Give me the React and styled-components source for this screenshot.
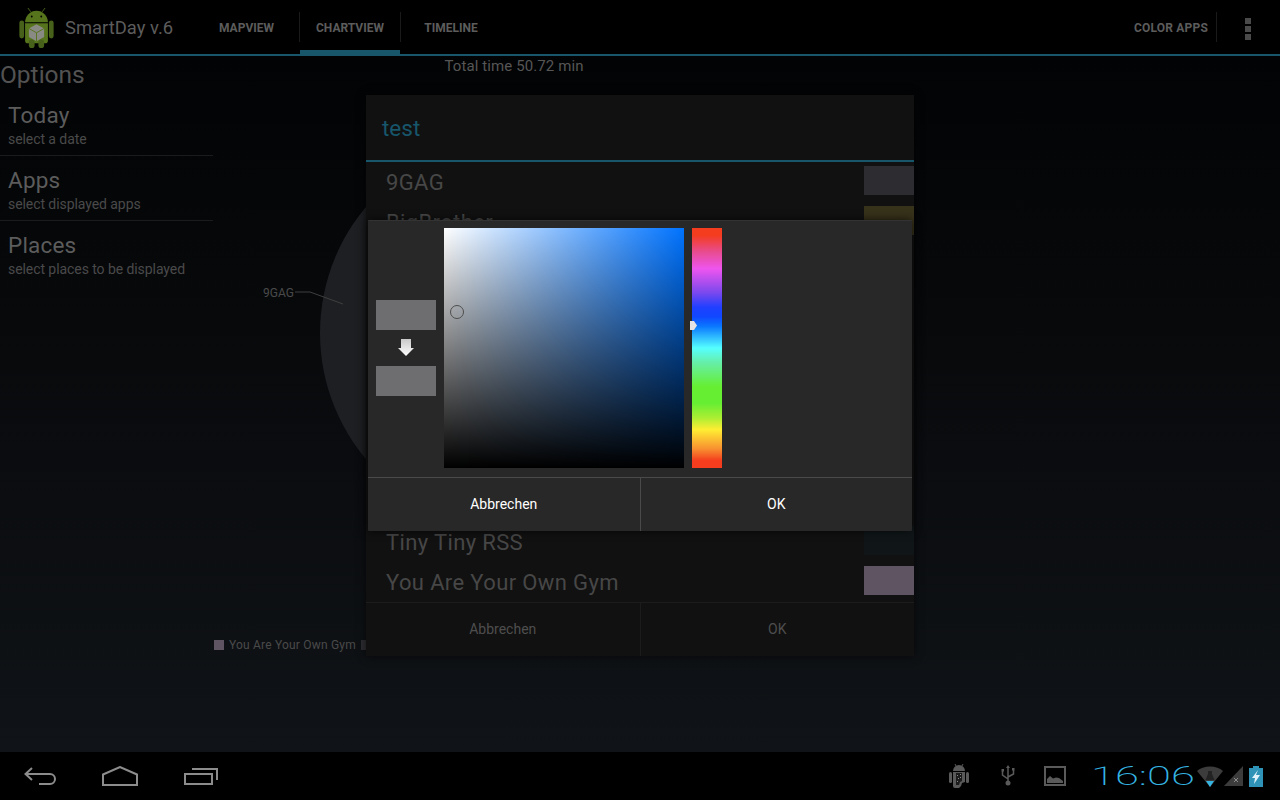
import React from "react";
import styled, { createGlobalStyle } from "styled-components";

const GlobalStyle = createGlobalStyle`
  html, body { margin: 0; padding: 0; background: #000; }
  body { font-family: Roboto, "Liberation Sans", sans-serif; }
`;

const listRows = [
  { name: "9GAG", color: "#2d2d31" },
  { name: "BigBrother", color: "#37321a" },
  { name: "", color: "#2a1530" },
  { name: "", color: "#111111" },
  { name: "", color: "#3a1a2a" },
  { name: "", color: "#1e1a0a" },
  { name: "", color: "#0c2a55" },
  { name: "", color: "#2a1040" },
  { name: "", color: "#1c1250" },
  { name: "Tiny Tiny RSS", color: "#101618" },
  { name: "You Are Your Own Gym", color: "#5f5562" },
];

const options = [
  { title: "Today", sub: "select a date" },
  { title: "Apps", sub: "select displayed apps" },
  { title: "Places", sub: "select places to be displayed" },
];

const Screen = styled.div`
  position: relative;
  width: 1280px;
  height: 800px;
  overflow: hidden;
  display: flex;
  flex-direction: column;
  background: #000;
`;

const ActionBar = styled.header`
  height: 54px;
  flex: none;
  display: flex;
  align-items: stretch;
  background: #000;
  border-bottom: 2px solid #17566b;
`;

const Brand = styled.div`
  width: 194px;
  flex: none;
  display: flex;
  align-items: center;
  gap: 11px;
  padding-left: 19px;
  box-sizing: border-box;
  color: #5c5c5c;
  font-size: 18.4px;
  svg {
    margin-top: 2px;
  }
`;

const Tab = styled.div`
  width: ${(p) => p.$width}px;
  display: flex;
  align-items: center;
  justify-content: center;
  padding-top: 2px;
  color: #5c5c5c;
  font-size: 12px;
  font-weight: 700;
  box-sizing: border-box;
  ${(p) => p.$active && "box-shadow: inset 0 -4px 0 #17566b;"}
`;

const TabDivider = styled.span`
  width: 1px;
  flex: none;
  margin: 12px 0;
  background: #1a1a1a;
`;

const Spacer = styled.div`
  flex: 1;
`;

const ActionButton = styled.div`
  display: flex;
  align-items: center;
  padding: 2px 8px 0 0;
  color: #5c5c5c;
  font-size: 12px;
  font-weight: 700;
  letter-spacing: 0.2px;
`;

const OverflowMenu = styled.div`
  width: 64px;
  display: flex;
  flex-direction: column;
  align-items: center;
  justify-content: center;
  gap: 2px;
  padding: 4px 1px 0 0;
  border-left: 1px solid #1a1a1a;
  margin: 12px 0;
  box-sizing: border-box;
`;

const Dot = styled.span`
  width: 6px;
  height: 6px;
  background: #4a4a4a;
`;

const Content = styled.main`
  flex: 1;
  display: flex;
  background: linear-gradient(to bottom, #020304, #101317);
`;

const Sidebar = styled.aside`
  width: 214px;
  flex: none;
`;

const SidebarTitle = styled.div`
  height: 35px;
  line-height: 38px;
  font-size: 24.5px;
  color: #525252;
`;

const OptionRow = styled.div`
  height: 65px;
  width: 213px;
  padding: 10px 0 0 8px;
  box-sizing: border-box;
  border-bottom: ${(p) => (p.$last ? "none" : "1px solid #191b1d")};
`;

const OptionTitle = styled.div`
  font-size: 22.500px;
  letter-spacing: 0.2px;
  line-height: 29px;
  color: #5c5c5c;
`;

const OptionSub = styled.div`
  font-size: 14px;
  letter-spacing: -0.07px;
  line-height: 18px;
  color: #4a4a4a;
`;

const ChartColumn = styled.section`
  width: 600px;
  flex: none;
  display: flex;
  flex-direction: column;
`;

const TotalTime = styled.div`
  height: 20px;
  line-height: 20px;
  text-align: center;
  font-size: 15px;
  letter-spacing: 0.1px;
  color: #565656;
`;

const Chart = styled.svg`
  display: block;
  width: 600px;
  height: 560px;
`;

const Legend = styled.div`
  height: 18px;
  display: flex;
  align-items: center;
  gap: 5px;
  font-size: 12px;
  letter-spacing: 0.2px;
  color: #4a4a4a;
`;

const LegendSwatch = styled.span`
  width: 10px;
  height: 10px;
  background: ${(p) => p.$color};
`;

const ListDialog = styled.div`
  position: absolute;
  left: 366px;
  top: 95px;
  width: 548px;
  height: 561px;
  display: flex;
  flex-direction: column;
  background: #111111;
  box-shadow: 0 0 8px rgba(0, 0, 0, 0.6);
`;

const DialogTitle = styled.div`
  height: 67px;
  flex: none;
  padding: 1px 0 0 16px;
  box-sizing: border-box;
  display: flex;
  align-items: center;
  font-size: 22.500px;
  color: #17566b;
  border-bottom: 2px solid #17566b;
`;

const ListRow = styled.div`
  height: 40px;
  flex: none;
  display: flex;
  align-items: center;
  justify-content: space-between;
  padding-left: 20px;
  font-size: 22px;
  letter-spacing: 0.37px;
  color: #474747;
`;

const RowSwatch = styled.span`
  width: 50px;
  height: 29px;
  margin-bottom: 3px;
  background: ${(p) => p.$color};
`;

const ButtonBar = styled.div`
  flex: 1;
  display: flex;
  border-top: 1px solid ${(p) => p.$line};
`;

const DialogButton = styled.div`
  flex: 1;
  display: flex;
  align-items: center;
  justify-content: center;
  padding-bottom: 2px;
  font-size: 14px;
  color: ${(p) => p.$color};
  border-left: ${(p) => (p.$line ? `1px solid ${p.$line}` : "none")};
`;

const PickerDialog = styled.div`
  position: absolute;
  left: 368px;
  top: 220px;
  width: 544px;
  height: 311px;
  display: flex;
  flex-direction: column;
  background: #282828;
  border-top: 1px solid #333;
  box-sizing: border-box;
  border-radius: 1px;
  box-shadow: 0 0 10px rgba(0, 0, 0, 0.7);
`;

const PickerBody = styled.div`
  height: 256px;
  flex: none;
  display: flex;
  box-sizing: border-box;
  padding: 7px 0 0 8px;
`;

const PreviewColumn = styled.div`
  width: 60px;
  height: 240px;
  flex: none;
  display: flex;
  flex-direction: column;
  align-items: center;
  justify-content: center;
  margin-right: 8px;
`;

const PreviewSwatch = styled.div`
  width: 60px;
  height: 30px;
  background: ${(p) => p.$color};
`;

const ArrowBox = styled.svg`
  display: block;
  width: 18px;
  height: 36px;
`;

const SatValue = styled.div`
  position: relative;
  width: 240px;
  height: 240px;
  flex: none;
  background:
    linear-gradient(to top, #000, rgba(0, 0, 0, 0)),
    linear-gradient(to right, #fff, #0073ff);
`;

const SatCursor = styled.div`
  position: absolute;
  left: 6px;
  top: 77px;
  width: 14px;
  height: 14px;
  box-sizing: border-box;
  border-radius: 50%;
  border: 1px solid #4c4c4c;
  box-shadow: inset 0 0 0 1px rgba(170, 170, 170, 0.35);
`;

const HueBar = styled.div`
  position: relative;
  width: 30px;
  height: 240px;
  flex: none;
  margin-left: 8px;
  background: linear-gradient(
    to bottom,
    #f43c1e 0%,
    #f43c1e 3%,
    #e84c90 10%,
    #ee55ee 17%,
    #7a48ee 27%,
    #2040ff 33%,
    #1048ff 37%,
    #0a78ff 41%,
    #55ffff 50%,
    #66eeaa 56%,
    #66ee33 66%,
    #66ee33 73%,
    #aaee33 79%,
    #ffee33 84%,
    #f89030 92%,
    #f43c1e 97%
  );
`;

const HueMarker = styled.svg`
  position: absolute;
  left: -2px;
  top: 93px;
  width: 7px;
  height: 9px;
`;

const NavBar = styled.footer`
  height: 48px;
  flex: none;
  display: flex;
  align-items: center;
  background: #000;
  padding-left: 23px;
`;

const NavIcons = styled.div`
  display: flex;
  align-items: center;
  gap: 45px;
`;

const StatusArea = styled.div`
  margin-left: auto;
  display: flex;
  align-items: center;
  padding-right: 17px;
`;

const StatusIcon = styled.svg`
  display: block;
  flex: none;
  margin-left: ${(p) => p.$gap || 0}px;
`;

const Clock = styled.div`
  width: 101px;
  margin-left: 25px;
  flex: none;
  font-size: 26px;
  font-weight: 200;
  line-height: 26px;
  color: #35b4e2;
  transform: scaleX(1.67);
  transform-origin: left center;
  white-space: nowrap;
`;

function AndroidLogo() {
  return (
    <svg width="35" height="40" viewBox="0 0 36 42">
      <path d="M12 4 9 0M24 4l3-4" stroke="#4a651a" strokeWidth="1" />
      <path d="M6 15a12 12 0 0 1 24 0z" fill="#56741c" />
      <circle cx="13" cy="9" r="1" fill="#000" />
      <circle cx="23" cy="9" r="1" fill="#000" />
      <rect x="0" y="13" width="5" height="19" rx="2.500" fill="#47601a" />
      <rect x="31" y="13" width="5" height="19" rx="2.500" fill="#47601a" />
      <path d="M6 16h24v18a3 3 0 0 1-3 3H9a3 3 0 0 1-3-3z" fill="#56741c" />
      <rect x="10" y="33" width="6" height="9" rx="3" fill="#47601a" />
      <rect x="20" y="33" width="6" height="9" rx="3" fill="#47601a" />
      <path d="m18 17 8 4.500v9L18 35l-8-4.500v-9z" fill="#8a8a84" />
      <path d="m10 21.500 8 4.500 8-4.500M18 26v9" stroke="#56741c" strokeWidth="1" fill="none" />
    </svg>
  );
}

function BackIcon() {
  return (
    <svg width="34" height="18" viewBox="0 0 34 18" fill="none" stroke="#8c8c8c" strokeWidth="2">
      <path d="M9 1 2.500 7 9 13" />
      <path d="M2.500 7H27a5 5 0 0 1 0 10H16" />
    </svg>
  );
}

function HomeIcon() {
  return (
    <svg width="37" height="20" viewBox="0 0 37 20" fill="none" stroke="#8c8c8c" strokeWidth="2">
      <path d="M1 19V8.500L18 1l17 7.500V19z" />
    </svg>
  );
}

function RecentsIcon() {
  return (
    <svg width="35" height="18" viewBox="0 0 35 18" fill="none" stroke="#8c8c8c" strokeWidth="2">
      <rect x="1" y="7" width="27" height="10" />
      <path d="M8 2h25v11" />
    </svg>
  );
}

function StatusAndroid() {
  return (
    <StatusIcon width="20" height="24" viewBox="0 0 20 24" fill="#5a5a5a">
      <path d="M6 0 7 2M14 0 13 2" stroke="#5a5a5a" strokeWidth="1" />
      <path d="M4 7a6 6 0 0 1 12 0z" />
      <rect x="0" y="8" width="3" height="11" rx="1.500" />
      <rect x="17" y="8" width="3" height="11" rx="1.500" />
      <path d="M4 8h12v10l-3 1-1 3-2 2H6a2 2 0 0 1-2-2z" />
      <path d="M7 9h6v8l-2 1-1 3H7z" fill="#1c1c1c" />
      <path d="M8 11h1v1H8zM11 10h1v1h-1zM9 14h1v1H9zM11 13h1v1h-1zM8 17h1v1H8z" fill="#8a8a8a" />
    </StatusIcon>
  );
}

function StatusUsb() {
  return (
    <StatusIcon $gap={31} width="16" height="22" viewBox="0 0 16 22" fill="none" stroke="#5a5a5a" strokeWidth="1.500">
      <path d="M8 2v14M8 14 2.500 10V6M8 12l5.500-3V5" />
      <circle cx="8" cy="18" r="2.500" fill="#5a5a5a" stroke="none" />
      <path d="M8 0 6 3h4z" fill="#5a5a5a" stroke="none" />
      <rect x="1.500" y="4" width="2.500" height="2.500" fill="#5a5a5a" stroke="none" />
      <rect x="12" y="3" width="2.500" height="2.500" fill="#5a5a5a" stroke="none" />
    </StatusIcon>
  );
}

function StatusPicture() {
  return (
    <StatusIcon $gap={28} width="22" height="20" viewBox="0 0 22 20">
      <rect x="1" y="1" width="20" height="18" fill="none" stroke="#5a5a5a" strokeWidth="2" />
      <path d="M3 17v-4l3-3 3 2.500 3-1 3 .5 4 3v2z" fill="#5a5a5a" />
    </StatusIcon>
  );
}

function StatusWifi() {
  return (
    <StatusIcon $gap={5} width="26" height="21" viewBox="0 0 26 21">
      <path d="M0 5C6-1 20-1 26 5L13 21z" fill="#3c3c3c" />
      <path d="M8.500 14 11 8V5h4v3l2.500 6z" fill="#232323" />
      <path d="M9 15h8l-4 6z" fill="#35b4e2" />
    </StatusIcon>
  );
}

function StatusSignal() {
  return (
    <StatusIcon $gap={1} width="19" height="20" viewBox="0 0 19 20">
      <path d="M0 20 19 0v20z" fill="#3c3c3c" />
      <path d="m10 12 4 4m0-4-4 4" stroke="#8c8c8c" strokeWidth="1" />
    </StatusIcon>
  );
}

function StatusBattery() {
  return (
    <StatusIcon $gap={6} width="14" height="21" viewBox="0 0 14 21">
      <path d="M4 0h6v2h4v19H0V2h4z" fill="#2f93b8" />
      <path d="M9 4 3 12h3l-1 6 6-9H7z" fill="#dff2fa" />
    </StatusIcon>
  );
}

export default function App() {
  return (
    <Screen>
      <GlobalStyle />
      <ActionBar>
        <Brand>
          <AndroidLogo />
          SmartDay v.6
        </Brand>
        <Tab $width={105}>MAPVIEW</Tab>
        <TabDivider />
        <Tab $width={100} $active>CHARTVIEW</Tab>
        <TabDivider />
        <Tab $width={100}>TIMELINE</Tab>
        <Spacer />
        <ActionButton>COLOR APPS</ActionButton>
        <OverflowMenu>
          <Dot />
          <Dot />
          <Dot />
        </OverflowMenu>
      </ActionBar>

      <Content>
        <Sidebar>
          <SidebarTitle>Options</SidebarTitle>
          {options.map((o, i) => (
            <OptionRow key={o.title} $last={i === options.length - 1}>
              <OptionTitle>{o.title}</OptionTitle>
              <OptionSub>{o.sub}</OptionSub>
            </OptionRow>
          ))}
        </Sidebar>
        <ChartColumn>
          <TotalTime>Total time 50.72 min</TotalTime>
          <Chart viewBox="0 0 600 560">
            <circle cx="302" cy="257" r="196" fill="#1d1f22" />
            <path d="M81 216h15l33 12" fill="none" stroke="#3f3f3f" strokeWidth="1" />
            <text x="49" y="221" fontSize="12" fill="#4a4a4a">9GAG</text>
          </Chart>
          <Legend>
            <LegendSwatch $color="#5f5562" />
            You Are Your Own Gym
            <LegendSwatch $color="#2d2d31" />
          </Legend>
        </ChartColumn>
      </Content>

      <NavBar>
        <NavIcons>
          <BackIcon />
          <HomeIcon />
          <RecentsIcon />
        </NavIcons>
        <StatusArea>
          <StatusAndroid />
          <StatusUsb />
          <StatusPicture />
          <Clock>16:06</Clock>
          <StatusWifi />
          <StatusSignal />
          <StatusBattery />
        </StatusArea>
      </NavBar>

      <ListDialog>
        <DialogTitle>test</DialogTitle>
        {listRows.map((row, i) => (
          <ListRow key={i}>
            {row.name}
            <RowSwatch $color={row.color} />
          </ListRow>
        ))}
        <ButtonBar $line="#1c1c1c">
          <DialogButton $color="#4e4e4e">Abbrechen</DialogButton>
          <DialogButton $color="#4e4e4e" $line="#1c1c1c">OK</DialogButton>
        </ButtonBar>
      </ListDialog>

      <PickerDialog>
        <PickerBody>
          <PreviewColumn>
            <PreviewSwatch $color="#6e6e71" />
            <ArrowBox viewBox="0 0 18 36">
              <defs>
                <linearGradient id="arrowFill" x1="0" y1="0" x2="0" y2="1">
                  <stop offset="0" stopColor="#c8c8c8" />
                  <stop offset="1" stopColor="#ffffff" />
                </linearGradient>
              </defs>
              <path d="M4 9h10v9h3l-8 8-8-8h3z" fill="url(#arrowFill)" />
            </ArrowBox>
            <PreviewSwatch $color="#6e6e71" />
          </PreviewColumn>
          <SatValue>
            <SatCursor />
          </SatValue>
          <HueBar>
            <HueMarker viewBox="0 0 7 9">
              <path d="M0 0h4l3 4.500L4 9H0z" fill="#e4e4e4" />
            </HueMarker>
          </HueBar>
        </PickerBody>
        <ButtonBar $line="#4a4a4a">
          <DialogButton $color="#ffffff">Abbrechen</DialogButton>
          <DialogButton $color="#ffffff" $line="#4a4a4a">OK</DialogButton>
        </ButtonBar>
      </PickerDialog>
    </Screen>
  );
}
